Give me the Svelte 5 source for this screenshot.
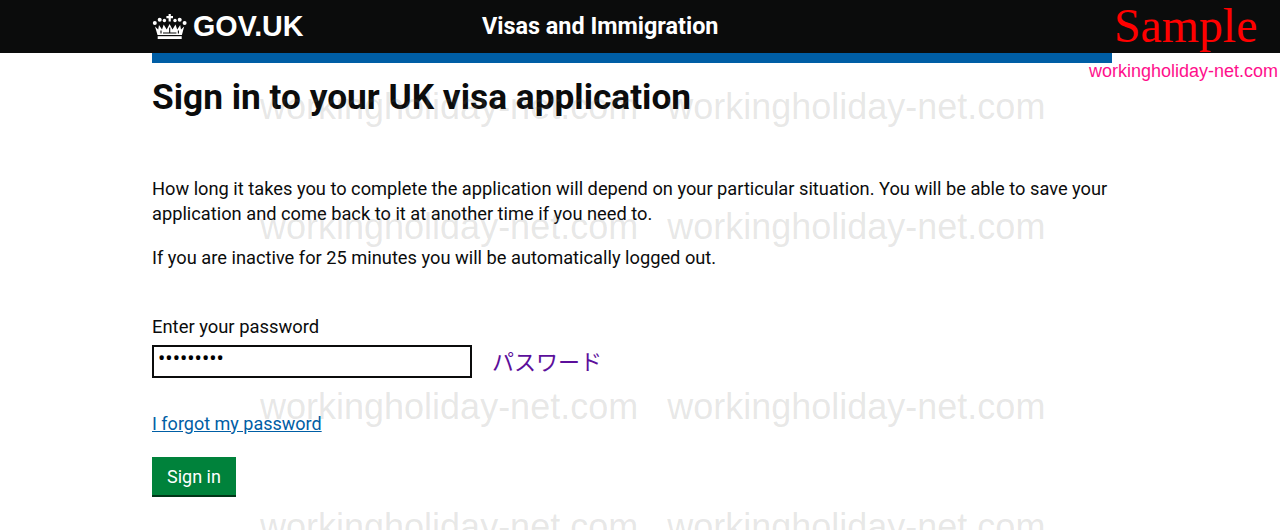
<script>
  const rows = [
    { top: 86, items: 2 },
    { top: 206, items: 2 },
    { top: 386, items: 2 },
    { top: 506, items: 2 }
  ];
</script>

<div class="page">
  <header class="header">
    <div class="wrap head-inner">
      <div class="logo">
        <svg class="crown" width="36" height="28" viewBox="0 0 36 28" aria-hidden="true">
          <g fill="#fff">
            <path d="M16.600 1h2.200v2h2.200v2.200h-2.200v3.300h-2.200V5.200h-2.200V3h2.200z"/>
            <circle cx="2.800" cy="10" r="2"/><circle cx="32.600" cy="10" r="2"/>
            <circle cx="7.700" cy="6.800" r="2"/><circle cx="27.700" cy="6.800" r="2"/>
            <circle cx="12.400" cy="7.500" r="1.700"/><circle cx="23" cy="7.500" r="1.700"/>
            <path d="M5.500 22 3 13.500l3.200 3 .8-4.500 3 4.500 1.700-5 3 5 2.900-5.500 2.900 5.500 3-5 1.700 5 3-4.500.8 4.500 3.200-3L29.900 22z"/>
            <rect x="5.700" y="23.200" width="24" height="2.800"/>
          </g>
          <path d="M11 20h13.400M17.700 14.500V20M9 17.500v3M26.400 17.500v3" stroke="#0b0c0c" stroke-width="1.100" fill="none"/>
        </svg>
        <span class="wordmark">GOV.UK</span>
      </div>
      <div class="service">Visas and Immigration</div>
    </div>
    <div class="sample">Sample</div>
  </header>

  <div class="wrap"><div class="bar"></div></div>
  <div class="site-tag">workingholiday-net.com</div>

  <main class="wrap main">
    <h1>Sign in to your UK visa application</h1>
    <p class="lead">How long it takes you to complete the application will depend on your particular situation. You will be able to save your application and come back to it at another time if you need to.</p>
    <p class="second">If you are inactive for 25 minutes you will be automatically logged out.</p>

    <label class="label" for="pw">Enter your password</label>
    <div class="field-row">
      <input id="pw" class="input" type="password" value="password1" />
      <span class="note">パスワード</span>
    </div>

    <a class="link" href="#forgot">I forgot my password</a>
    <button class="btn" type="button">Sign in</button>
  </main>

  <div class="marks" aria-hidden="true">
    {#each rows as row}
      <div class="mark-row" style="top:{row.top}px">
        <span>workingholiday-net.com</span>
        <span>workingholiday-net.com</span>
      </div>
    {/each}
  </div>
</div>

<style>
  :global(body) { margin: 0; background: #fff; }
  .page {
    position: relative;
    height: 530px;
    overflow: hidden;
    font-family: Roboto, "Liberation Sans", sans-serif;
    color: #0b0c0c;
  }
  .wrap { width: 960px; margin-left: 152px; }
  .header { position: relative; height: 53px; background: #0b0c0c; }
  .head-inner { display: flex; align-items: center; height: 53px; }
  .logo { display: flex; align-items: center; gap: 5px; width: 330px; }
  .crown { display: block; }
  .wordmark {
    color: #fff;
    font: 700 28.7px/53px "Liberation Sans", sans-serif;
  }
  .service { color: #fff; font: 700 23.4px/53px Roboto, sans-serif; }
  .sample {
    position: absolute;
    top: -1px;
    left: 1114px;
    color: #f00;
    font: 47.8px/53px "Liberation Serif", serif;
  }
  .bar { height: 10px; background: #005ea5; }
  .site-tag {
    position: absolute;
    top: 62px;
    left: 1089px;
    color: #ff0f8c;
    font: 18px/18px "Liberation Sans", sans-serif;
  }
  .main { padding-top: 12px; }
  h1 { margin: 0; font: 700 35.25px/45px Roboto, sans-serif; }
  p { margin: 0; font-size: 18.25px; line-height: 25px; }
  .lead { margin-top: 56px; }
  .second { margin-top: 19px; }
  .label { display: block; margin-top: 44px; font-size: 18.4px; line-height: 25px; }
  .field-row { display: flex; align-items: center; gap: 20px; margin-top: 6px; }
  .input {
    box-sizing: border-box;
    width: 320px;
    height: 33px;
    border: 2px solid #0b0c0c;
    padding: 0 4px 6px;
    font: 21.7px Roboto, sans-serif;
    background: #fff;
    border-radius: 0;
    outline: none;
  }
  .note { color: #5c0f9b; font: 22px/33px "Noto Sans CJK JP", sans-serif; position: relative; top: -1px; }
  .link { display: block; width: fit-content; margin-top: 33px; color: #005ea5; font-size: 18px; line-height: 25px; text-decoration: underline; }
  .btn {
    display: block;
    margin-top: 21px;
    width: 84px;
    height: 40px;
    border: 0;
    border-bottom: 2px solid #003618;
    background: #00823b;
    color: #fff;
    font: 18px Roboto, sans-serif;
    border-radius: 0;
    padding: 0;
  }
  .marks { position: absolute; inset: 0; pointer-events: none; }
  .mark-row {
    position: absolute;
    left: 260px;
    display: flex;
    gap: 29px;
    color: rgba(110, 110, 105, 0.17);
    font: 36px/42px "Liberation Sans", sans-serif;
    white-space: nowrap;
  }
</style>
